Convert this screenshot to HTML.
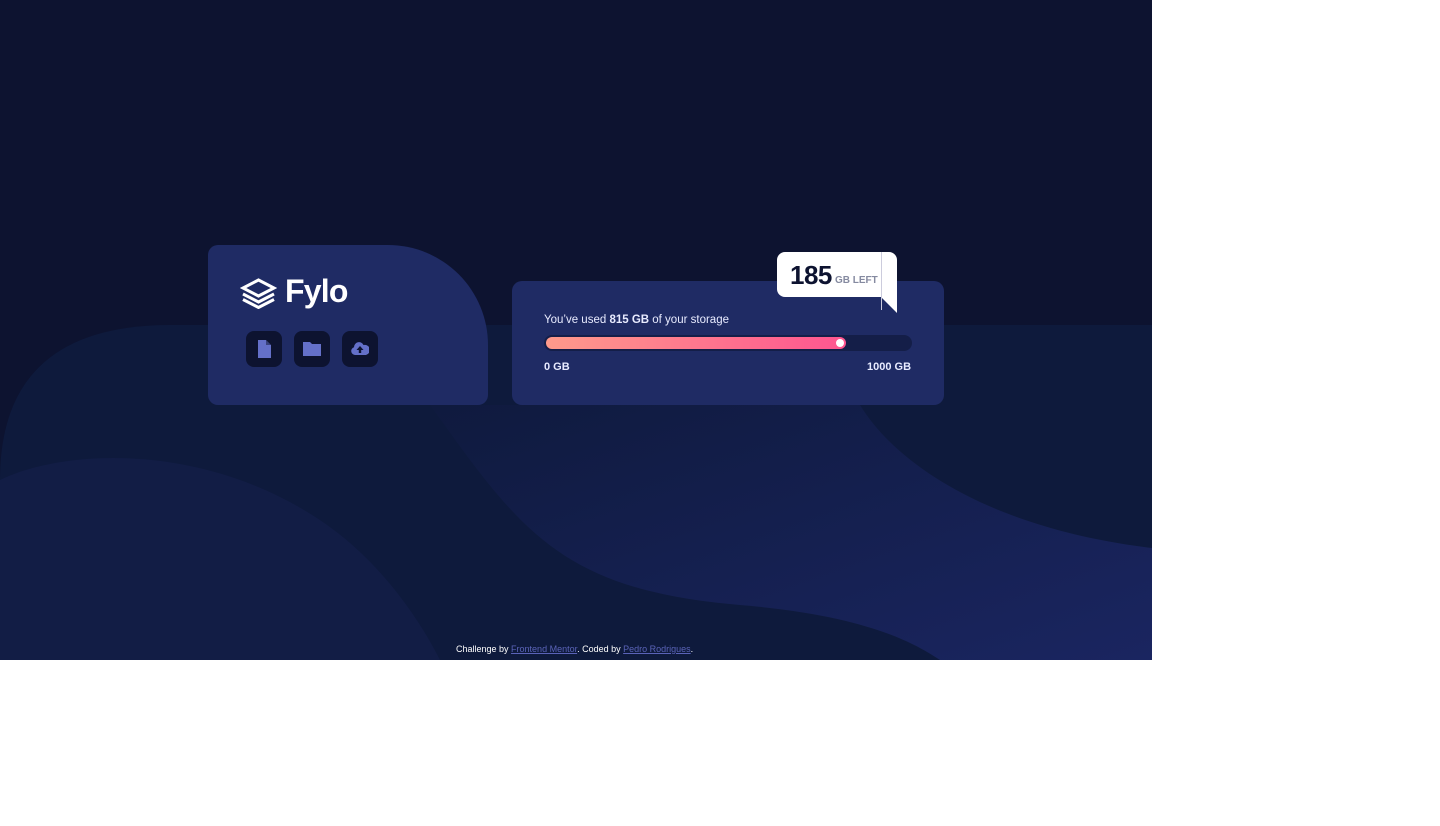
<!DOCTYPE html>
<html><head><style>
*{margin:0;padding:0;box-sizing:border-box}
body{width:1440px;height:826px;background:#fff;font-family:"Liberation Sans",sans-serif;position:relative;overflow:hidden}
#bg{position:absolute;left:0;top:0;width:1152px;height:660px;background:#0d1330;overflow:hidden}
.card{position:absolute;background:#1f2b64}
.ic{position:absolute;top:331px;width:36px;height:36px;background:#0d1330;border-radius:8px}
.ic svg{position:absolute;left:9px;top:9px}
</style></head><body>
<div id="bg">
<svg width="1152" height="660" style="position:absolute;left:0;top:0">
<defs><linearGradient id="g" x1="0" y1="0" x2="1" y2="1"><stop offset="0" stop-color="#0f1a3e"/><stop offset="1" stop-color="#1a2560"/></linearGradient></defs>
<path d="M0 480 Q0 325 170 325 L1152 325 L1152 660 L0 660Z" fill="#0e1a3c"/>
<path d="M430 405 C520 530 560 590 740 605 C860 615 910 640 940 660 L1152 660 L1152 548 C1000 530 900 470 860 405Z" fill="url(#g)"/>
<path d="M0 480 C60 450 200 440 320 520 C380 560 420 620 440 660 L0 660Z" fill="#121d45"/>
</svg>
<div class="card" style="left:208px;top:245px;width:280px;height:160px;border-radius:10px 100px 10px 10px"></div>
<svg style="position:absolute;left:240px;top:278px" width="37" height="31" viewBox="0 0 37 31" fill="none" stroke="#fff" stroke-width="3"><path d="M18.5 2 L34 10 L18.5 18 L3 10Z"/><path d="M3 16 L18.5 24 L34 16"/><path d="M3 21.5 L18.5 29.5 L34 21.5"/></svg>
<div style="position:absolute;left:285px;top:273px;color:#fff;font-size:32px;font-weight:bold;letter-spacing:-0.8px">Fylo</div>
<div class="ic" style="left:246px"><svg width="18" height="18" viewBox="0 0 18 18"><path d="M3 0h8l5 5v13H3z" fill="#6470c9"/><path d="M11 0v5h5z" fill="#0d1330" opacity=".5"/></svg></div>
<div class="ic" style="left:294px"><svg width="18" height="18" viewBox="0 0 18 18"><path d="M0 2h7l2 2h9v12H0z" fill="#6470c9"/></svg></div>
<div class="ic" style="left:342px"><svg width="18" height="18" viewBox="0 0 18 18"><path d="M4 15a4 4 0 0 1-1-7.8A5 5 0 0 1 12.5 5 3.8 3.8 0 0 1 15 15z" fill="#6470c9"/><path d="M9 6l-3.5 4h2.3v3h2.4v-3h2.3z" fill="#0d1330"/></svg></div>
<div class="card" style="left:512px;top:281px;width:432px;height:124px;border-radius:10px"></div>
<div style="position:absolute;left:544px;top:314px;color:#e8ebff;font-size:11.5px">You’ve used <b>815 GB</b> of your storage</div>
<div style="position:absolute;left:544px;top:335px;width:368px;height:16px;border-radius:8px;background:#141e48"></div>
<div style="position:absolute;left:546px;top:337px;width:300px;height:12px;border-radius:6px;background:linear-gradient(90deg,#fe9a8b,#fe5590)"></div>
<div style="position:absolute;left:836px;top:339px;width:8px;height:8px;border-radius:50%;background:#fff"></div>
<div style="position:absolute;left:544px;top:361px;color:#e8ebff;font-size:11px;font-weight:bold">0 GB</div>
<div style="position:absolute;left:867px;top:361px;color:#e8ebff;font-size:11px;font-weight:bold">1000 GB</div>
<div style="position:absolute;left:777px;top:252px;width:120px;height:45px;background:#fff;border-radius:8px 8px 0 8px"></div>
<div style="position:absolute;left:881px;top:297px;width:0;height:0;border-top:16px solid #fff;border-left:16px solid transparent"></div>
<div style="position:absolute;left:881px;top:252px;width:1px;height:58px;background:#ccd"></div>
<div style="position:absolute;left:790px;top:260px;color:#0d1330;font-size:26px;font-weight:bold;letter-spacing:-0.5px">185</div>
<div style="position:absolute;left:835px;top:275px;color:#858aa0;font-size:10px;font-weight:bold">GB LEFT</div>
<div style="position:absolute;left:456px;top:644px;color:#fff;font-size:9px">Challenge by <span style="color:#5a63b8;text-decoration:underline">Frontend Mentor</span>. Coded by <span style="color:#5a63b8;text-decoration:underline">Pedro Rodrigues</span>.</div>
</div>
</body></html>
